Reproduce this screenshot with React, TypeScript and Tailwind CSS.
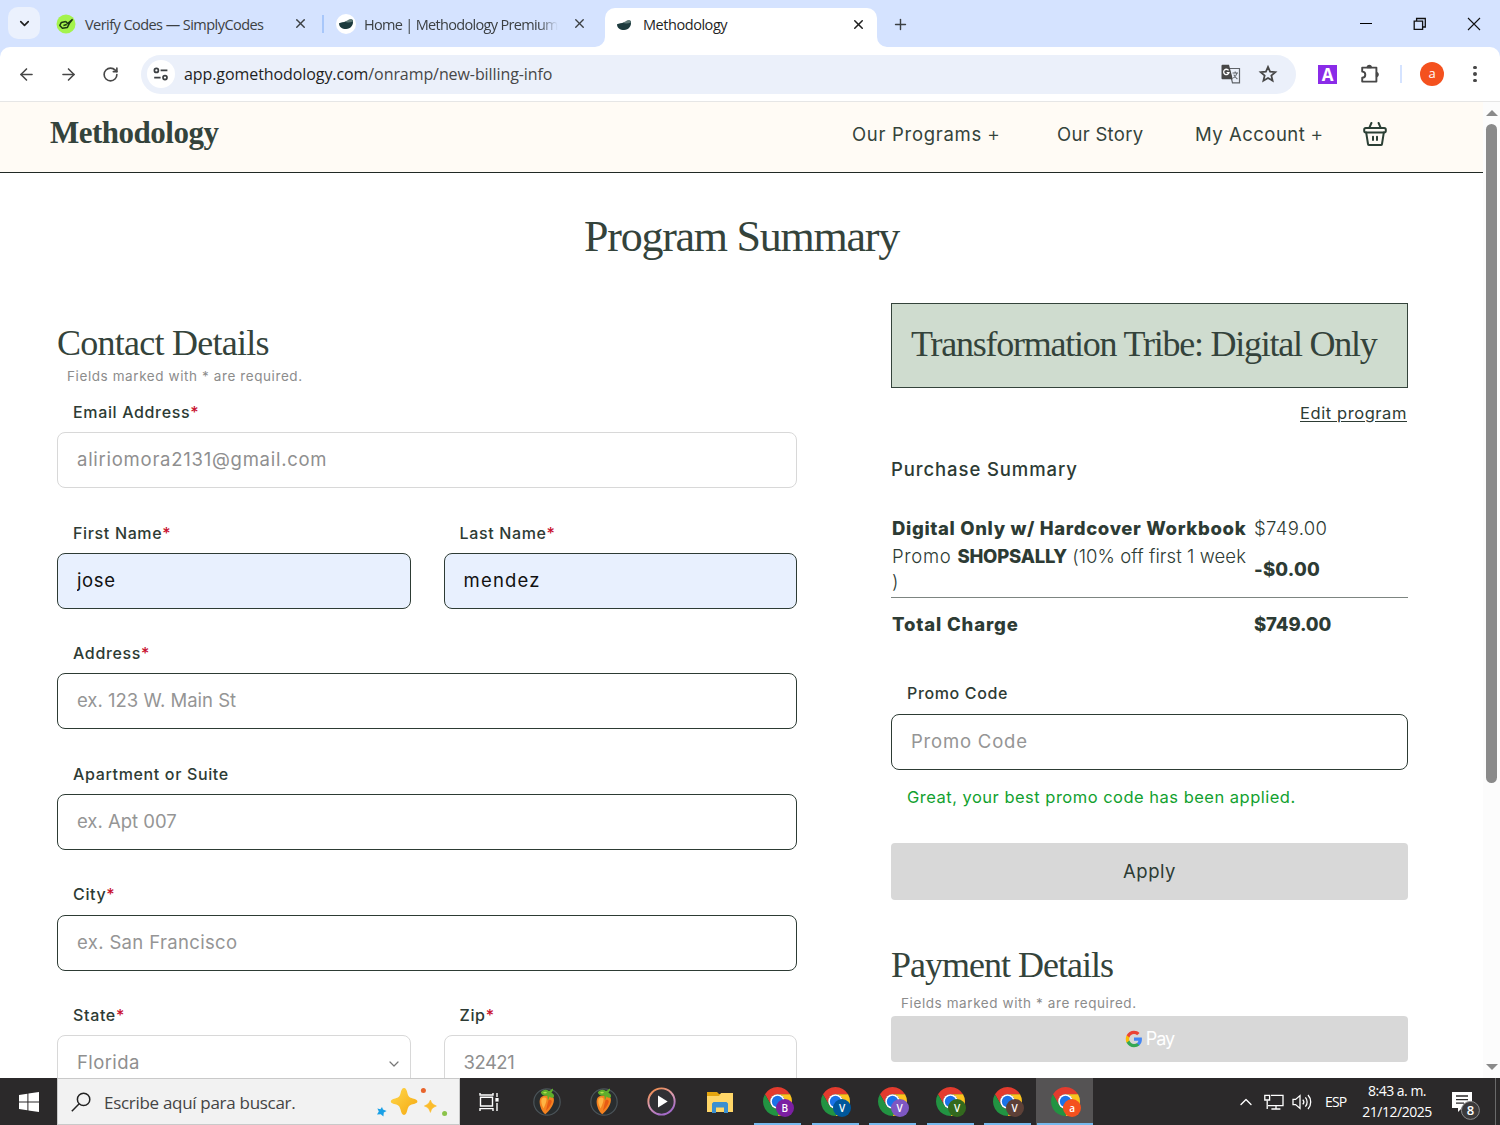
import type { ReactNode } from 'react';
import { ArrowLeft, ArrowRight, ChevronDown, ChevronUp, Plus, RotateCw, X } from 'lucide-react';

const CHROME_WINDOWS = [
  { letter: 'B', badge: 'bg-[#7b1fa2]' },
  { letter: 'V', badge: 'bg-[#01579b]' },
  { letter: 'V', badge: 'bg-[#7e57c2]' },
  { letter: 'V', badge: 'bg-[#33691e]' },
  { letter: 'V', badge: 'bg-[#5d4037]' },
  { letter: 'a', badge: 'bg-[#f4511e]', active: true },
];

function BowlIcon({ className }: { className: string }) {
  return (
    <svg viewBox="0 0 16 16" className={className}>
      <path d="M1 7.2C3 6 5.4 6.4 8 5.4C11 4.4 12.6 3 14.8 4C16 8.8 12.6 13 8.2 13C4 13 1 10.8 1 7.2Z" fill="#1d3b3e" />
      <path d="M6.5 5.8C9 5.2 10.5 3 13 3C14.6 3.2 15 4.4 14.9 5.4C12 6.8 9 6.8 6.5 5.8Z" fill="#5f7a78" />
    </svg>
  );
}

function TabTitle({ children, className = '' }: { children: ReactNode; className?: string }) {
  return <span className={`whitespace-nowrap text-[14.5px] text-[#3c4043] ${className}`}>{children}</span>;
}

function TabStrip() {
  return (
    <div className="h-[47px] bg-[#d5e3ff] flex items-center">
      <div className="w-8 h-8 ml-2 mb-px rounded-[10px] bg-[#ebf1fd] flex items-center justify-center">
        <ChevronDown size={15} strokeWidth={2.6} color="#1f1f1f" />
      </div>

      <div className="flex items-center w-[281px] pl-[16px]">
        <svg viewBox="0 0 20 20" className="w-5 h-5 shrink-0">
          <circle cx="10" cy="10" r="9.5" fill="#a4f34c" />
          <path d="M9.8 7.6L5.4 8.4L3.8 11.4L6.4 14.2L11.4 13.4L13.4 9.4L16.6 5.2M9.8 7.6L11.6 9.6L16.6 5.2M7.4 11.4L10.8 10.6" fill="none" stroke="#1c3a12" strokeWidth="1.5" strokeLinejoin="round" />
        </svg>
        <TabTitle className="ml-[9px] mt-[2px] w-[200px] tracking-[-0.55px]">Verify Codes — SimplyCodes</TabTitle>
        <X size={15} strokeWidth={2.2} color="#3c4043" className="shrink-0 ml-[10px] mr-[13px]" />
      </div>
      <div className="w-[2px] h-[18px] bg-[#a8c7fa] ml-[1px]" />

      <div className="flex items-center w-[281px] pl-[12px]">
        <div className="w-5 h-5 rounded-full bg-white flex items-center justify-center shrink-0">
          <BowlIcon className="w-[16px] h-[16px]" />
        </div>
        <TabTitle className="ml-[8px] mt-[2px] w-[194px] tracking-[-0.68px] [mask-image:linear-gradient(to_right,black_90%,transparent)]">Home | Methodology Premium</TabTitle>
        <X size={15} strokeWidth={2.2} color="#3c4043" className="shrink-0 ml-[14px]" />
      </div>

      <div className="relative flex items-center w-[272px] h-[39px] mt-2 rounded-t-[10px] bg-white pl-[11px] pb-[6px]">
        <BowlIcon className="w-4 h-4" />
        <TabTitle className="ml-[11px] w-[200px] !text-[#1f1f1f] tracking-[-0.45px]">Methodology</TabTitle>
        <X size={15} strokeWidth={2.4} color="#1f1f1f" className="shrink-0 ml-[8px]" />
        <svg viewBox="0 0 10 10" className="absolute -left-[10px] bottom-0 w-[10px] h-[10px]"><path d="M10 0V10H0A10 10 0 0 0 10 0Z" fill="#fff" /></svg>
        <svg viewBox="0 0 10 10" className="absolute -right-[10px] bottom-0 w-[10px] h-[10px]"><path d="M0 0V10H10A10 10 0 0 1 0 0Z" fill="#fff" /></svg>
      </div>
      <Plus size={17} strokeWidth={2} color="#3c4043" className="ml-[15px] mt-px" />

      <div className="ml-auto flex items-center">
        <div className="w-3 h-px bg-black mr-[41px]" />
        <svg viewBox="0 0 14 14" className="w-[14px] h-[14px] mr-[40px]" fill="none" stroke="#111" strokeWidth="1.3">
          <path d="M1.2 4.2H9.6V12.4H1.2Z" />
          <path d="M3.6 4V1.5H12.3V10H9.8" />
        </svg>
        <svg viewBox="0 0 14 14" className="w-[14px] h-[14px] mr-[19px]" stroke="#111" strokeWidth="1.1">
          <path d="M1 1L13 13M13 1L1 13" />
        </svg>
      </div>
    </div>
  );
}

function Toolbar() {
  return (
    <div className="h-[55px] bg-[#d5e3ff]">
      <div className="h-full bg-white rounded-t-[10px] border-b border-[#e6e6e6] flex items-center">
        <ArrowLeft size={19} strokeWidth={2} color="#474747" className="ml-[17px]" />
        <ArrowRight size={19} strokeWidth={2} color="#474747" className="ml-[23px]" />
        <RotateCw size={17} strokeWidth={2.3} color="#474747" className="ml-[24px]" />

        <div className="ml-[22px] w-[1155px] h-[39px] rounded-full bg-[#ebf0fa] flex items-center">
          <div className="ml-[6px] w-7 h-7 rounded-full bg-white flex items-center justify-center">
            <svg viewBox="0 0 16 14" className="w-4 h-[14px]" fill="none" stroke="#3c4043" strokeWidth="1.7">
              <circle cx="3.4" cy="3.4" r="2" />
              <path d="M7.6 3.4H14.4M1.2 10.6H7.6" />
              <circle cx="12" cy="10.6" r="2" />
            </svg>
          </div>
          <span className="ml-[9px] text-[16px] tracking-[-0.08px] text-[#474747] whitespace-nowrap">
            <span className="text-[#1f1f1f]">app.gomethodology.com</span>/onramp/new-billing-info
          </span>
          <svg viewBox="0 0 20 20" className="ml-auto w-5 h-5">
            <path d="M8 4.5H18.5V18.8H11.5Z" fill="#ebf0fa" stroke="#5f6368" strokeWidth="1.2" />
            <path d="M1.5 .8H8L11.8 15.2H1.5A1 1 0 0 1 .5 14.2V1.8A1 1 0 0 1 1.5 .8Z" fill="#474747" />
            <path d="M7.6 6.4A2.7 2.7 0 1 0 8 8.6H5.6" fill="none" stroke="#fff" strokeWidth="1.3" />
            <path d="M11.5 9H17M14.2 7.6V9M16 9C15.4 11.6 13.8 13 12.4 14M12.8 10.6C13.6 12.6 15 14 16.4 15" fill="none" stroke="#5f6368" strokeWidth="1.1" />
          </svg>
          <svg viewBox="0 0 24 24" className="ml-[17px] mr-[18px] w-5 h-5" fill="none" stroke="#474747" strokeWidth="2.1" strokeLinejoin="miter">
            <path d="M12 3.4L14.5 9.1L20.8 9.7L16 13.8L17.5 20L12 16.7L6.5 20L8 13.8L3.2 9.7L9.5 9.1Z" />
          </svg>
        </div>

        <div className="ml-[22px] w-[19px] h-[19px] bg-[#8a2be8] flex items-center justify-center text-white text-[17px] leading-none font-bold">A</div>
        <svg viewBox="0 0 22 22" className="ml-[22px] w-[22px] h-[22px]" fill="none" stroke="#474747" strokeWidth="1.9" strokeLinejoin="round">
          <path d="M3.2 4.6H17.4V18.6H3.2V14.8A3 3 0 0 0 3.2 8.6Z" />
          <path d="M8.4 4.2A2 2 0 0 1 12.2 4.2ZM17.8 9.8A2 2 0 0 1 17.8 13.4Z" fill="#474747" />
        </svg>
        <div className="ml-[19px] w-[2px] h-[18px] bg-[#d5e3ff]" />
        <div className="ml-[18px] w-6 h-6 rounded-full bg-[#f4511e] text-white text-[13px] leading-none flex items-center justify-center pb-0.5">a</div>
        <div className="ml-[29px] flex flex-col gap-[3px]">
          <span className="w-[3.5px] h-[3.5px] rounded-full bg-[#474747]" />
          <span className="w-[3.5px] h-[3.5px] rounded-full bg-[#474747]" />
          <span className="w-[3.5px] h-[3.5px] rounded-full bg-[#474747]" />
        </div>
      </div>
    </div>
  );
}

function SiteHeader() {
  return (
    <header className="h-[71px] shrink-0 bg-[#fffbf5] border-b-[1.5px] border-[#202925] flex items-center pb-[4px] text-[18.5px] text-[#34433b]">
      <div className="ml-[50px] -mt-[5px] w-[802px] font-['Liberation_Serif',serif] font-bold text-[31px] tracking-[-0.5px] leading-none">Methodology</div>
      <div className="w-[205px] whitespace-nowrap tracking-[0.7px]">Our Programs<span className="ml-[5px] text-[20px] leading-none font-light">+</span></div>
      <div className="w-[138px] whitespace-nowrap tracking-[0.3px]">Our Story</div>
      <div className="w-[168px] whitespace-nowrap tracking-[0.5px]">My Account<span className="ml-[5px] text-[20px] leading-none font-light">+</span></div>
      <svg viewBox="0 0 24 24" className="w-6 h-6 -mt-[2px]" fill="none" stroke="#2b3f34" strokeWidth="2" strokeLinejoin="round" strokeLinecap="round">
        <rect x="1.2" y="6" width="21.6" height="4.4" rx="1.6" />
        <path d="M3.2 10.6L5 22C5.1 22.6 5.6 23 6.2 23H17.8C18.4 23 18.9 22.6 19 22L20.8 10.6M8.4 1L6.4 5.6M15.6 1L17.6 5.6M10 14.8V18M14 14.8V18" />
      </svg>
    </header>
  );
}

type FieldProps = {
  label: string;
  required?: boolean;
  placeholder?: string;
  value?: string;
  tone?: 'normal' | 'muted' | 'filled';
  width: string;
  tracking?: string;
  select?: boolean;
};

const TONES = {
  normal: 'border-[#2d3b34]',
  muted: 'border-[#d8d8d8] text-[#8f8f8f]',
  filled: 'border-[#2d3b34] bg-[#e8f0fe] text-[#111]',
};

function Field({ label, required, placeholder, value, tone = 'normal', width, tracking = '', select }: FieldProps) {
  return (
    <div className={`mb-8 ${width}`}>
      <label className="block h-[26px] pt-[0.4px] leading-6 mb-[6.6px] ml-4 text-[16px] tracking-[0.65px] font-medium text-[#2d3b34]">
        {label}
        {required && <span className="text-[#c8102e]">*</span>}
      </label>
      <div className="relative">
        <input type="text" defaultValue={value} placeholder={placeholder}
          className={`block w-full h-14 rounded-lg border px-[19px] pb-[2px] text-[18.5px] outline-none placeholder:text-[#959595] ${tracking} ${TONES[tone]}`} />
        {select && <ChevronDown size={16} strokeWidth={1.8} color="#777" className="absolute right-[9px] top-[21px]" />}
      </div>
    </div>
  );
}

function SectionTitle({ children, tracking }: { children: ReactNode; tracking: string }) {
  return <h2 className={`font-['Liberation_Serif',serif] text-[36px] leading-10 text-[#34433b] whitespace-nowrap ${tracking}`}>{children}</h2>;
}

function RequiredNote({ className }: { className: string }) {
  return <p className={`ml-[10px] h-5 leading-5 text-[13.5px] tracking-[0.59px] text-[#8c8c8c] ${className}`}>Fields marked with * are required.</p>;
}

function ContactForm() {
  return (
    <section className="w-[740px]">
      <div className="mt-[20px]"><SectionTitle tracking="tracking-[-0.75px]">Contact Details</SectionTitle></div>
      <RequiredNote className="mt-[3px]" />
      <div className="mt-[13.6px] flex flex-wrap justify-between">
        <Field label="Email Address" required value="aliriomora2131@gmail.com" tone="muted" width="w-full" tracking="tracking-[0.74px]" />
        <Field label="First Name" required value="jose" tone="filled" width="w-[354px]" tracking="tracking-[0.6px]" />
        <Field label="Last Name" required value="mendez" tone="filled" width="w-[353.5px]" tracking="tracking-[1.2px]" />
        <Field label="Address" required placeholder="ex. 123 W. Main St" width="w-full" />
        <Field label="Apartment or Suite" placeholder="ex. Apt 007" width="w-full" />
        <Field label="City" required placeholder="ex. San Francisco" width="w-full" tracking="tracking-[0.35px]" />
        <Field label="State" required value="Florida" tone="muted" width="w-[354px]" tracking="tracking-[0.4px]" select />
        <Field label="Zip" required value="32421" tone="muted" width="w-[353.5px]" tracking="tracking-[-0.5px]" />
      </div>
    </section>
  );
}

function OrderSummary() {
  return (
    <section className="w-[517px] text-[#2d3b34]">
      <div className="h-[85px] border border-[#34433b] bg-[#cfdccf] pl-[19px] pt-[20px]">
        <SectionTitle tracking="tracking-[-1.24px]">Transformation Tribe: Digital Only</SectionTitle>
      </div>
      <div className="mt-[13px] h-6 leading-6 text-right pr-px text-[16.5px] tracking-[0.58px]"><a className="underline underline-offset-2">Edit program</a></div>
      <h3 className="mt-[32px] h-6 leading-6 text-[18.5px] tracking-[0.9px] font-medium">Purchase Summary</h3>

      <div className="mt-[35px] grid grid-cols-[362px_1fr] text-[18.5px] leading-[25px] pb-[3px] border-b border-[#7d8581] pl-px whitespace-nowrap">
        <div className="font-extrabold h-7 tracking-[0.65px]">Digital Only w/ Hardcover Workbook</div>
        <div className="h-7 font-light tracking-[0.35px]">$749.00</div>
        <div className="font-light tracking-[0.08px]"><span className="tracking-[0.7px]">Promo </span><b className="font-extrabold tracking-[-0.2px]">SHOPSALLY</b> (10% off first 1 week<br />)</div>
        <div className="self-center font-extrabold tracking-[0.2px]">-$0.00</div>
      </div>
      <div className="mt-[14px] grid grid-cols-[362px_1fr] pl-px h-6 leading-6 text-[18.5px] font-extrabold">
        <div className="tracking-[0.85px]">Total Charge</div>
        <div className="tracking-[-0.1px]">$749.00</div>
      </div>

      <div className="mt-[45px] -mb-[17px]">
        <Field label="Promo Code" placeholder="Promo Code" width="w-full" tracking="tracking-[0.8px]" />
      </div>
      <p className="ml-4 h-6 leading-6 text-[16.5px] tracking-[0.49px] text-[#12a12f] whitespace-nowrap">Great, your best promo code has been applied.</p>
      <button className="mt-[34px] w-full h-[57px] pt-[2px] rounded bg-[#d8d8d8] text-[18.5px] tracking-[0.5px]">Apply</button>

      <div className="mt-[45px]"><SectionTitle tracking="tracking-[-1px]">Payment Details</SectionTitle></div>
      <RequiredNote className="mt-[8px]" />
      <button className="mt-[3px] w-full h-[46px] rounded bg-[#d8d8d8] flex items-center justify-center gap-[3px] text-white text-[18px] tracking-[-1px]">
        <svg viewBox="0 0 24 24" className="w-[18px] h-[18px]">
          <path fill="#4285f4" d="M22.56 12.25c0-.78-.07-1.53-.2-2.25H12v4.26h5.92c-.26 1.37-1.04 2.53-2.21 3.31v2.77h3.57c2.08-1.92 3.28-4.74 3.28-8.09z" />
          <path fill="#34a853" d="M12 23c2.97 0 5.46-.98 7.28-2.66l-3.57-2.77c-.98.66-2.23 1.06-3.71 1.06-2.86 0-5.29-1.93-6.16-4.53H2.18v2.84C3.99 20.53 7.7 23 12 23z" />
          <path fill="#fbbc05" d="M5.84 14.09c-.22-.66-.35-1.36-.35-2.09s.13-1.43.35-2.09V7.07H2.18C1.43 8.55 1 10.22 1 12s.43 3.45 1.18 4.93l2.85-2.22.81-.62z" />
          <path fill="#ea4335" d="M12 5.38c1.62 0 3.06.56 4.21 1.64l3.15-3.15C17.45 2.09 14.97 1 12 1 7.7 1 3.99 3.47 2.18 7.07l3.66 2.84c.87-2.6 3.3-4.53 6.16-4.53z" />
        </svg>
        Pay
      </button>
    </section>
  );
}

function Scrollbar() {
  return (
    <div className="w-[17px] shrink-0 bg-[#fcfcfc] flex flex-col items-center">
      <svg viewBox="0 0 12 6" className="w-3 h-[6px] mt-[8px]"><path d="M0 6L6 0L12 6Z" fill="#8a8a8a" /></svg>
      <div className="mt-[8px] w-[11px] h-[659px] rounded-full bg-[#8a8a8a]" />
      <svg viewBox="0 0 12 6" className="w-3 h-[6px] mt-auto mb-[8px]"><path d="M0 0L6 6L12 0Z" fill="#8a8a8a" /></svg>
    </div>
  );
}

function ChromeIcon() {
  return (
    <svg viewBox="2 2 44 44" className="w-[29px] h-[29px]">
      <path d="M24 13H43.05A22 22 0 0 0 4.95 13L14.47 29.5A11 11 0 0 1 24 13Z" fill="#e33b2e" />
      <path d="M24 13H43.05A22 22 0 0 0 4.95 13L14.47 29.5A11 11 0 0 1 24 13Z" fill="#fcc31e" transform="rotate(120 24 24)" />
      <path d="M24 13H43.05A22 22 0 0 0 4.95 13L14.47 29.5A11 11 0 0 1 24 13Z" fill="#229342" transform="rotate(240 24 24)" />
      <circle cx="24" cy="24" r="11" fill="#fff" />
      <circle cx="24" cy="24" r="8.6" fill="#1a73e8" />
    </svg>
  );
}

function FruitIcon() {
  return (
    <svg viewBox="0 0 28 28" className="w-7 h-7">
      <circle cx="14" cy="14" r="13.2" fill="#292d2f" stroke="#4b5459" strokeWidth="1.2" />
      <path d="M7.4 10C10 6.4 18 6.4 20.6 10C22.4 15 16.6 23 12.2 26.2C8.4 23.6 5 14.6 7.4 10Z" fill="#f58220" />
      <path d="M8.6 11C10 9 13 9 13.6 11C13.4 15 11.6 18 10.6 20.6C8.8 17 7.6 13.6 8.6 11Z" fill="#ffb444" />
      <path d="M15.6 12C17.4 11.2 19.4 12 18.6 14.4C17.4 17.8 14.8 21 13 22.8C14 18.6 14.6 15.4 15.6 12Z" fill="#e65a14" />
      <path d="M14.2 7.2C11.4 8.4 8.8 7.4 7.8 4.6C9.8 1.4 13.4 1 15.8 3C17.4 3 18.2 1.6 20 .6C20.4 2 19.4 3.6 18.4 4.8C20.4 5.4 21.6 7 20.8 9.6C18.6 9.8 17.4 9.4 16.6 8.4L15 12.6Z" fill="#5fae2c" />
      <path d="M10 4.6C11.4 3.4 13.4 3.6 14 4.8C12.8 5.8 11.2 6 10 4.6Z" fill="#b4df4c" />
    </svg>
  );
}

function TaskCell({ children, active }: { children: ReactNode; active?: boolean }) {
  return <div className={`w-[57.5px] h-full flex items-center justify-center ${active ? 'bg-[#555354]' : ''}`}>{children}</div>;
}

function Taskbar() {
  return (
    <footer className="h-[47px] bg-[#2b292a] flex text-white">
      <div className="w-[57px] flex items-center justify-center">
        <svg viewBox="0 0 20 20" className="w-5 h-5" fill="#fff">
          <path d="M0 2.9L8.4 1.7V9.5H0ZM9.4 1.6L20 0V9.5H9.4ZM0 10.5H8.4V18.3L0 17.1ZM9.4 10.5H20V20L9.4 18.4Z" />
        </svg>
      </div>
      <div className="w-[403px] mr-[0.7px] bg-[#f2f2f2] border border-[#c9c9c9] flex items-center text-[#444]">
        <svg viewBox="0 0 20 20" className="ml-[13px] w-5 h-5" fill="none" stroke="#222" strokeWidth="1.5">
          <circle cx="12.6" cy="7.4" r="6.2" />
          <path d="M8.2 11.8L.8 19.2" />
        </svg>
        <span className="ml-[13px] mt-[2px] text-[17px] tracking-[-0.3px] whitespace-nowrap">Escribe aquí para buscar.</span>
        <svg viewBox="0 0 72 30" className="ml-auto mr-[11px] w-[72px] h-[30px]">
          <defs>
            <linearGradient id="gold" x1="0" y1="0" x2="1" y2="1">
              <stop offset="0" stopColor="#ffd84d" />
              <stop offset="1" stopColor="#f5a80f" />
            </linearGradient>
          </defs>
          <path d="M28 1C29.8 1 30.8 3 31.4 6C32.2 9.4 33.4 10.6 36.8 11.4C39.8 12.2 41.4 13 41.4 14.4C41.4 15.8 39.8 16.4 36.8 17.2C33.4 18 32.2 19.4 31.4 22.8C30.8 25.8 29.8 28 28 28C26.2 28 25.2 25.8 24.6 22.8C23.8 19.4 22.6 18 19.2 17.2C16.2 16.4 14.8 15.8 14.8 14.4C14.8 13 16.2 12.2 19.2 11.4C22.6 10.6 23.8 9.4 24.6 6C25.2 3 26.2 1 28 1Z" fill="url(#gold)" />
          <path d="M54.4 13C55.6 16.4 56.6 17.2 60.4 19C56.6 20.6 55.6 21.4 54.4 25.4C53 21.4 52.2 20.6 48.4 19C52.2 17.2 53 16.4 54.4 13Z" fill="#fbbc2c" stroke="#fbbc2c" strokeWidth="0.6" />
          <path d="M6 20L7 22.6L10.6 24L7.8 25.6L7.4 29.4L4.8 27.2L1 27.4L2.8 24.4L1.4 21.4L4.4 22.2Z" fill="#1aa0e6" />
          <circle cx="47.4" cy="3.6" r="2.5" fill="#e8642c" />
          <circle cx="68.6" cy="26.4" r="2.5" fill="#8bc34a" />
        </svg>
      </div>

      <TaskCell>
        <svg viewBox="0 0 20 20" className="w-5 h-5" fill="none" stroke="#fff" strokeWidth="1.4">
          <path d="M1.5 5.2H13.5V14H1.5ZM1 1V3H14V1M1 19V16.6H14V19M18 1V5M18 11V19" />
          <path d="M16.4 6H19.6V9.6H16.4Z" fill="#fff" stroke="none" />
        </svg>
      </TaskCell>
      <TaskCell><FruitIcon /></TaskCell>
      <TaskCell><FruitIcon /></TaskCell>
      <TaskCell>
        <svg viewBox="0 0 30 30" className="w-[29px] h-[29px]">
          <defs>
            <linearGradient id="ring" x1="0" y1="0" x2=".5" y2="1">
              <stop offset="0" stopColor="#f58a3c" />
              <stop offset=".55" stopColor="#d99bb0" />
              <stop offset="1" stopColor="#a56bc8" />
            </linearGradient>
          </defs>
          <circle cx="15" cy="15" r="13.6" fill="#303034" stroke="url(#ring)" strokeWidth="2" />
          <path d="M11.4 8.8L21.4 15L11.4 21.2Z" fill="#fff" />
        </svg>
      </TaskCell>
      <TaskCell>
        <svg viewBox="0 0 26 22" className="ml-px w-[26px] h-[22px]">
          <path d="M0 1H10L12 3H26V21H0Z" fill="#e5a50f" />
          <path d="M0 5H12L14 2H26V21H0Z" fill="#ffd668" />
          <path d="M5 12.5L6.5 11H19.5L21 12.5V22H17V16.4H9V22H5Z" fill="#3a8fd0" />
        </svg>
      </TaskCell>
      {CHROME_WINDOWS.map((win, i) => (
        <TaskCell key={i} active={win.active}>
          <div className="relative ml-[1.5px] w-[48px] h-full flex items-center justify-center">
            <ChromeIcon />
            <div className={`absolute left-[22px] top-[21px] w-[18px] h-[18px] rounded-full flex items-center justify-center text-[10px] font-semibold leading-none ${win.badge}`}>{win.letter}</div>
            <div className={`absolute bottom-0 h-[2px] bg-[#76b9ed] ${win.active ? 'w-[56px]' : 'w-[47px]'}`} />
          </div>
        </TaskCell>
      ))}

      <div className="ml-auto flex items-center">
        <ChevronUp size={20} strokeWidth={1.6} className="mr-[8px]" />
        <svg viewBox="0 0 20 16" className="w-5 h-4 mr-[8px]" fill="none" stroke="#fff" strokeWidth="1.3">
          <path d="M7 1.4H19V11.6H4M12 11.6V15M7.4 15H16.4M3.2 6.4V15" />
          <path d="M.8 1.4H5.6V6H.8Z" />
        </svg>
        <svg viewBox="0 0 20 18" className="w-5 h-[18px] mr-[13px]" fill="none" stroke="#fff" strokeWidth="1.3">
          <path d="M1 6.4H3.6L8 2.6V15.4L3.6 11.6H1Z" />
          <path d="M10.8 6.6A3.6 3.6 0 0 1 10.8 11.4M13.4 4.4A7 7 0 0 1 13.4 13.6M16 2A10.4 10.4 0 0 1 16 16" />
        </svg>
        <span className="w-[23px] text-[14px] tracking-[-0.9px]">ESP</span>
        <div className="w-[78px] ml-[10px] mr-px -mt-[2px] text-center text-[14px] leading-[21px] tracking-[-0.5px] whitespace-nowrap">
          <div>8:43 a. m.</div>
          <div>21/12/2025</div>
        </div>
        <div className="relative mt-[9px] ml-[15px] w-[29px] h-[28px] mr-[14px]">
          <svg viewBox="0 0 29 28" className="w-[29px] h-[28px]">
            <path d="M0 0H20V16H10L6 20V16H0Z" fill="#fff" />
            <path d="M4 4H16M4 7.6H16M4 11.2H12" stroke="#2b292a" strokeWidth="1.3" />
            <circle cx="18.4" cy="18.4" r="9" fill="#3c3a3b" stroke="#8b8b8b" />
          </svg>
          <span className="absolute left-[14px] top-[10px] w-[9px] text-center text-[13px] leading-[17px] font-semibold">8</span>
        </div>
        <div className="w-px h-[47px] bg-[#6a6a6a] mr-1" />
      </div>
    </footer>
  );
}

export default function App() {
  return (
    <div className="w-[1500px] h-[1125px] overflow-hidden flex flex-col bg-white font-['Open_Sans','Noto_Sans',sans-serif]">
      <TabStrip />
      <Toolbar />
      <div className="h-[976px] flex overflow-hidden">
        <div className="w-[1483px] flex flex-col font-['Inter',sans-serif]">
          <SiteHeader />
          <h1 className="mt-[38px] h-[52px] leading-[52px] text-center font-['Liberation_Serif',serif] text-[44px] tracking-[-1.25px] text-[#34433b]">Program Summary</h1>
          <main className="mt-[40px] flex justify-between pl-[57px] pr-[75px]">
            <ContactForm />
            <OrderSummary />
          </main>
        </div>
        <Scrollbar />
      </div>
      <Taskbar />
    </div>
  );
}
